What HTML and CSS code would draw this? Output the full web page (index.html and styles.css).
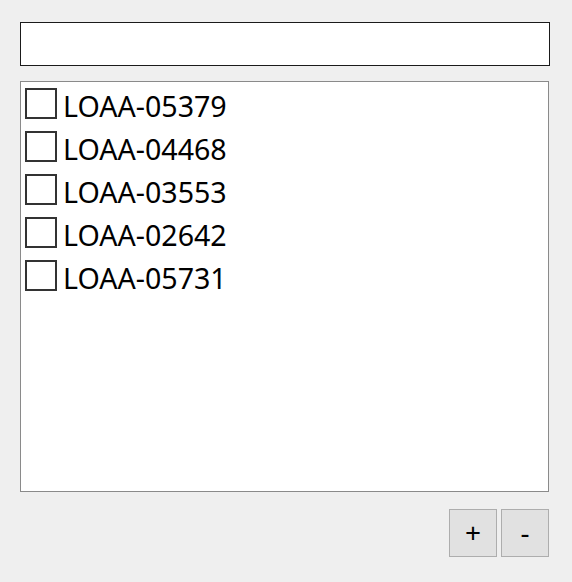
FILE: index.html
```html
<!DOCTYPE html>
<html>
<head>
<meta charset="utf-8">
<link rel="stylesheet" href="styles.css">
</head>
<body>
<div class="app">
  <input class="search" type="text">
  <div class="list">
    <div class="row"><span class="box"></span><span class="label">LOAA-05379</span></div>
    <div class="row"><span class="box"></span><span class="label">LOAA-04468</span></div>
    <div class="row"><span class="box"></span><span class="label">LOAA-03553</span></div>
    <div class="row"><span class="box"></span><span class="label">LOAA-02642</span></div>
    <div class="row"><span class="box"></span><span class="label">LOAA-05731</span></div>
  </div>
  <div class="actions">
    <button class="btn">+</button>
    <button class="btn">-</button>
  </div>
</div>
</body>
</html>
```
FILE: styles.css
```css
html, body {
  margin: 0;
  padding: 0;
  background: #efefef;
  font-family: "Noto Sans", "Open Sans", sans-serif;
}
.app {
  padding: 22px 0 0 20px;
  width: 530px;
  display: flex;
  flex-direction: column;
}
.search {
  box-sizing: border-box;
  width: 530px;
  height: 44px;
  margin: 0;
  border: 1px solid #1a1a1a;
  background: #fff;
  outline: none;
}
.list {
  box-sizing: border-box;
  margin-top: 15px;
  width: 529px;
  height: 411px;
  border: 1px solid #8a8a8a;
  background: #fff;
  padding: 0 0 0 4px;
}
.row {
  height: 43px;
  display: flex;
  align-items: center;
  gap: 6px;
}
.box {
  box-sizing: border-box;
  width: 32px;
  height: 31px;
  border: 2px solid #333;
  background: #fff;
  flex: none;
}
.label {
  font-size: 28.6px;
  color: #000;
  line-height: 1;
  position: relative;
  top: 3px;
}
.actions {
  margin-top: 17px;
  width: 529px;
  display: flex;
  justify-content: flex-end;
  gap: 4px;
}
.btn {
  box-sizing: border-box;
  width: 48px;
  height: 48px;
  margin: 0;
  padding: 0 0 2px 0;
  border: 1px solid #adadad;
  background: #e1e1e1;
  font-family: "Noto Sans", sans-serif;
  font-size: 28px;
  line-height: 1;
  color: #000;
}
```
